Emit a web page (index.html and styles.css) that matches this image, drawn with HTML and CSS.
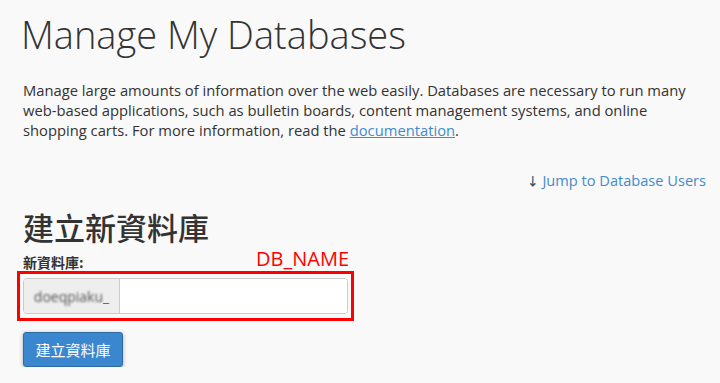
FILE: index.html
```html
<!DOCTYPE html>
<html lang="zh-Hant">
<head>
    <meta charset="UTF-8">
    <meta name="viewport" content="width=device-width, initial-scale=1.0">
    <title>Manage My Databases</title>
    <link rel="stylesheet" href="styles.css">
</head>
<body>
    <h1 class="page-title">Manage My Databases</h1>
    <p class="intro">Manage large amounts of information over the web easily. Databases are necessary to run many web-based applications, such as bulletin boards, content management systems, and online shopping carts. For more information, read the <a href="#">documentation</a>.</p>

    <div class="jump">
        <a href="#"><span class="arrow">&#8595;</span> Jump to Database Users</a>
    </div>

    <h2 class="section-title">建立新資料庫</h2>
    <div class="create-form">
        <div class="label-row">
            <label for="dbName">新資料庫:</label>
            <span class="note">DB_NAME</span>
        </div>
        <div class="highlight">
            <div class="input-group">
                <span class="prefix"><span class="blurred">doeqpiaku</span>_</span>
                <input type="text" id="dbName">
            </div>
        </div>
    </div>
    <button class="create-btn">建立資料庫</button>
</body>
</html>
```
FILE: styles.css
```css
body {
    margin: 0;
    padding: 0 14px 0 23px;
    background-color: #f9f9f9;
    color: #333;
    font-family: "Open Sans", "Noto Sans CJK TC", sans-serif;
}
.page-title {
    font-weight: 300;
    font-size: 38px;
    margin: 10px 0 0 -2px;
    line-height: 48px;
}
.intro {
    font-size: 14.75px;
    line-height: 20px;
    margin: 22px 0 0;
}
a {
    color: #428bca;
}
.jump {
    text-align: right;
    margin-top: 30px;
    font-size: 14.6px;
}
.jump a {
    text-decoration: none;
}
.jump .arrow {
    color: #2f5f6f;
    font-size: 12px;
    font-weight: bold;
}
.section-title {
    font-family: "Noto Sans CJK TC", sans-serif;
    font-size: 31px;
    font-weight: 500;
    margin: 17px 0 0;
    line-height: 40px;
}
.create-form {
    width: 337px;
    margin-left: -6px;
}
.label-row {
    display: flex;
    justify-content: space-between;
    align-items: flex-end;
    padding: 0 5px 0 6px;
    height: 24px;
}
.label-row label {
    font-family: "Noto Sans CJK TC", sans-serif;
    font-weight: bold;
    font-size: 14px;
    line-height: 18px;
}
.note {
    color: #ff0000;
    font-size: 20px;
    line-height: 24px;
}
.highlight {
    border: 3px solid #ff0000;
    padding: 4px 3px;
}
.input-group {
    display: flex;
    height: 34px;
    border: 1px solid #ccc;
    border-radius: 4px;
    overflow: hidden;
    background: #fff;
}
.prefix {
    width: 95px;
    background: #eee;
    border-right: 1px solid #ccc;
    color: #666;
    font-size: 14px;
    display: flex;
    align-items: center;
    justify-content: center;
}
.blurred {
    filter: blur(1px);
    color: #555;
}
.input-group input {
    flex: 1;
    border: none;
    outline: none;
    padding: 0 10px;
    font-size: 14px;
}
.create-btn {
    margin-top: 11px;
    background-color: #3a87cf;
    color: #fff;
    border: 1px solid #2e6da4;
    border-radius: 3px;
    padding: 0;
    height: 35px;
    width: 100px;
    font-family: "Noto Sans CJK TC", sans-serif;
    font-size: 15px;
    box-shadow: 0 1px 4px rgba(0, 0, 0, 0.3);
}
```
